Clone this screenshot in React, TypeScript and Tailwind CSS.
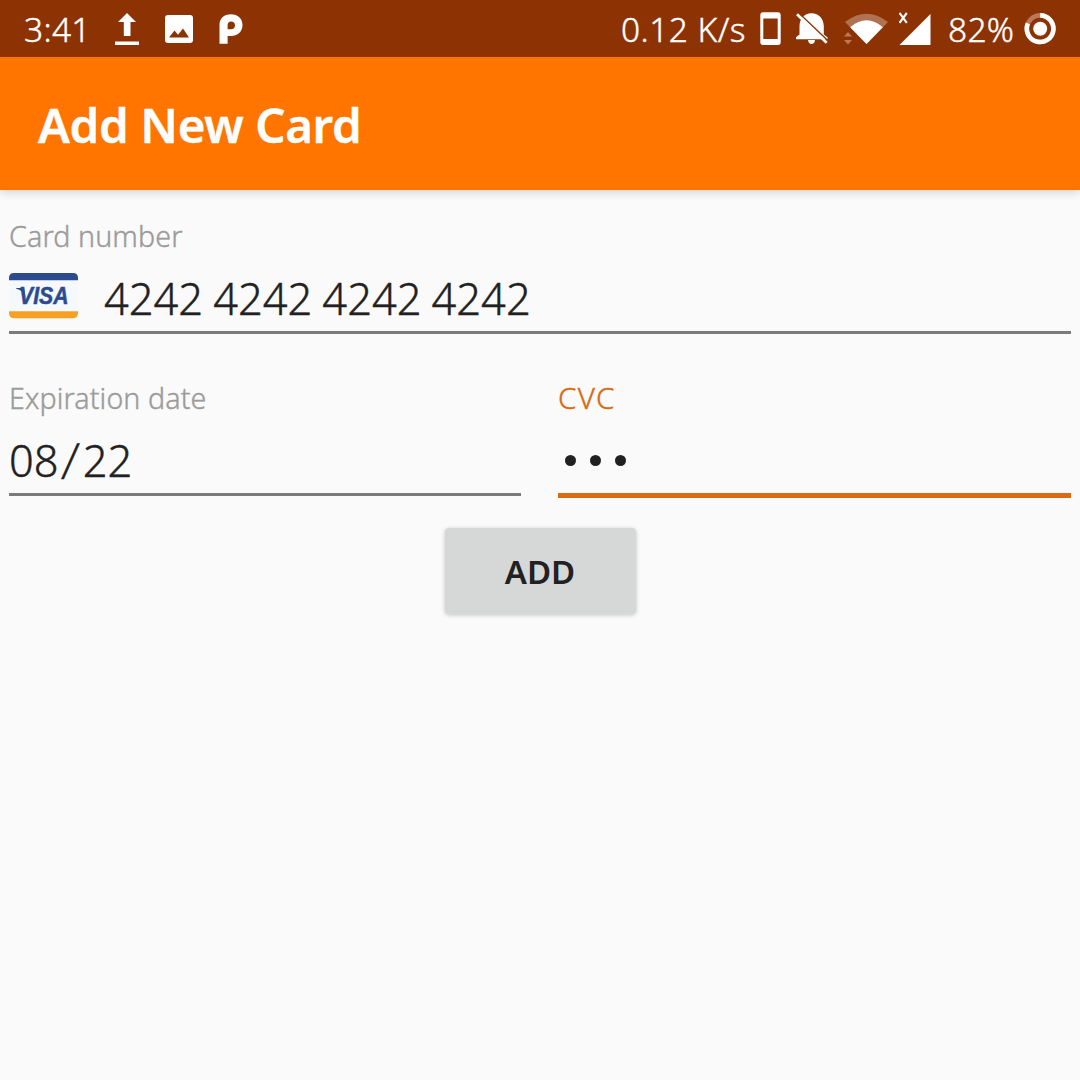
import type { ReactNode } from 'react';

function UploadIcon() {
  return (
    <svg className="ml-[25px] h-[34px] w-6 shrink-0" viewBox="0 0 24 34" fill="#fff">
      <path d="M12 1 L21 10 H15.5 V24 H8.8 V10 H3 Z M0 29.5 H24 V33 H0 Z" />
    </svg>
  );
}

function ImageIcon() {
  return (
    <svg className="ml-[26px] h-7 w-7 shrink-0" viewBox="0 0 28 28">
      <rect width="28" height="28" rx="3" fill="#fff" />
      <path d="M4 22.5 L9.5 15.5 L13 19.7 L18 13.5 L24 22.5 Z" fill="#8d3303" />
    </svg>
  );
}

function PandoraIcon() {
  return (
    <svg className="ml-[26px] h-[30px] w-6 shrink-0" viewBox="0 0 24 30">
      <path
        fillRule="evenodd"
        fill="#fff"
        d="M0.5 29.7 V10.5 C0.5 4.4 5.3 0.3 12 0.3 C18.8 0.3 23.5 4.7 23.5 11 C23.5 17.7 18.6 22 12 22 H8.6 V29.7 Z M8.6 15.2 H12 C14.5 15.2 16 13.6 16 11.2 C16 8.9 14.4 7.4 12.2 7.4 C9.9 7.4 8.6 8.9 8.6 11.2 Z"
      />
    </svg>
  );
}

function PhoneIcon() {
  return (
    <svg className="h-[34px] w-[22px] shrink-0" viewBox="0 0 22 34">
      <path
        fillRule="evenodd"
        fill="#fff"
        d="M3 0.3 H18 Q20.7 0.3 20.7 3.3 V30 Q20.7 33 18 33 H3 Q0.3 33 0.3 30 V3.3 Q0.3 0.3 3 0.3 Z M3.3 6.5 V27 H17.7 V6.5 Z"
      />
    </svg>
  );
}

function BellOffIcon() {
  return (
    <svg className="h-8 w-8 shrink-0" viewBox="0 0 32 32" fill="#fff">
      <path d="M0 26.3 V24.3 L3.5 21.5 V13.5 C3.5 6 8 0.2 15.5 0.2 C23 0.2 27.8 6 27.8 13.5 V21.5 L31.5 24.3 V26.3 Z" />
      <path d="M12 27 H19 C18.7 29.8 17.6 31 15.5 31 C13.5 31 12.3 29.8 12 27 Z" />
      <path d="M2.8 0 L32 27.7" stroke="#8d3303" strokeWidth="1.4" />
      <path d="M1 1.2 L30.7 29.7" stroke="#fff" strokeWidth="2.6" />
    </svg>
  );
}

function WifiIcon() {
  return (
    <svg className="h-8 w-11 shrink-0" viewBox="0 0 44 32">
      <path d="M1 9 Q22.5 -7.5 44 9 L22.5 31 Z" fill="#fff" fillOpacity="0.31" />
      <path d="M6.2 14.2 Q22.5 0.5 38.8 14.2 L22.5 31 Z" fill="#fff" />
      <path d="M0 23.5 L4 19 L8 23.5 Z M0 27 H8 L4 31.5 Z" fill="#bb785b" />
    </svg>
  );
}

function SignalIcon() {
  return (
    <svg className="h-9 w-8 shrink-0" viewBox="0 0 32 36">
      <path d="M0.5 34 L31.5 3 V34 Z" fill="#fff" />
      <path d="M0.5 2 L7.8 11.8 M7.8 2 L0.5 11.8" stroke="#fff" strokeWidth="2.1" />
    </svg>
  );
}

function BatteryIcon() {
  return (
    <svg className="h-8 w-8 shrink-0" viewBox="0 0 32 32" fill="none">
      <circle cx="16.2" cy="15.7" r="13.3" stroke="#bb785b" strokeWidth="4.6" />
      <path d="M16.2 2.4 A13.3 13.3 0 1 1 3.9 10.4" stroke="#fff" strokeWidth="4.6" />
      <circle cx="16.2" cy="15.7" r="7" fill="#fff" />
    </svg>
  );
}

function VisaIcon() {
  return (
    <svg className="h-[46px] w-[69px] shrink-0" viewBox="0 0 69 46">
      <path d="M0 7 H69 V39 H0 Z" fill="#f5f9fe" />
      <path d="M0 7.3 V5 Q0 0 5 0 H64 Q69 0 69 5 V7.3 Z" fill="#2c4b8f" />
      <path d="M0 38.3 H69 V40 Q69 45.3 63.5 45.3 H5.5 Q0 45.3 0 40 Z" fill="#f8a024" />
      <path d="M7 14.9 H15 L17 27 C15.5 20.5 12.5 17 7 15.6 Z" fill="#2c4b8f" />
      <text
        x="10"
        y="31"
        textLength="49.5"
        lengthAdjust="spacingAndGlyphs"
        fill="#2c4b8f"
        fontFamily="Liberation Sans, sans-serif"
        fontSize="23.5"
        fontStyle="italic"
        fontWeight="700"
        stroke="#2c4b8f"
        strokeWidth="0.5"
      >
        VISA
      </text>
    </svg>
  );
}

function Field({
  label,
  active = false,
  children,
}: {
  label: string;
  active?: boolean;
  children: ReactNode;
}) {
  return (
    <div className="flex min-w-0 flex-1 flex-col">
      <div
        className={`h-[42px] leading-[44px] ${active ? 'text-[29.5px] tracking-[1.4px] text-[#d86b13]' : 'text-[28.6px] tracking-[0.12px] text-[#9b9b9b]'}`}
      >
        {label}
      </div>
      <div className="flex h-[75px] items-center pt-2 text-[43.4px] leading-[60px] text-[#212121]">
        {children}
      </div>
      <div className={active ? 'h-[5px] bg-[#d86b13]' : 'mb-0.5 h-[3px] bg-[#7b7b7b]'} />
    </div>
  );
}

export default function App() {
  return (
    <div className="flex h-[1080px] w-[1080px] flex-col overflow-hidden bg-[#fafafa] font-['Noto_Sans',sans-serif] font-light whitespace-nowrap [-webkit-text-stroke:0.4px]">
      <header>
        <div className="relative flex h-[57px] items-center justify-between bg-[#8d3303] pr-6 pl-6 text-[33.5px] text-white">
          <div className="flex items-center">
            <span className="w-[66px] pt-0.5 tracking-[0.3px]">3:41</span>
            <UploadIcon />
            <ImageIcon />
            <PandoraIcon />
          </div>
          <div className="flex items-center">
            <span className="mr-[14px] w-[125px] pt-0.5 tracking-[0.45px]">0.12 K/s</span>
            <PhoneIcon />
            <span className="w-[14px]" />
            <BellOffIcon />
            <span className="w-4" />
            <WifiIcon />
            <span className="w-[11px]" />
            <SignalIcon />
            <span className="mr-[10px] ml-[17px] w-[66px] pt-0.5 tracking-[0.3px]">82%</span>
            <BatteryIcon />
          </div>
        </div>
        <div className="flex h-[133px] items-center bg-[#ff7500] pl-[38px] shadow-[0_2px_9px_rgba(0,0,0,0.17)]">
          <h1 className="pt-[3px] text-[47.5px] font-semibold tracking-[-0.35px] text-white">
            Add New Card
          </h1>
        </div>
      </header>
      <main className="flex flex-col px-[9px] pt-6">
        <div className="flex">
          <Field label="Card number">
            <div className="-mt-[3px]">
              <VisaIcon />
            </div>
            <span className="ml-[26px] pt-[3px] [word-spacing:-1.2px]">4242 4242 4242 4242</span>
          </Field>
        </div>
        <div className="mt-10 grid grid-cols-[512px_513px] gap-[37px]">
          <Field label="Expiration date">
            <span className="pt-[3px]">
              08
              <span className="mx-[4.5px] inline-block -skew-x-[8deg] scale-y-115">/</span>
              22
            </span>
          </Field>
          <Field label="CVC" active>
            <div className="flex gap-[14px] pt-0.5 pl-[7px]">
              <span className="size-[11px] rounded-full bg-[#212121]" />
              <span className="size-[11px] rounded-full bg-[#212121]" />
              <span className="size-[11px] rounded-full bg-[#212121]" />
            </div>
          </Field>
        </div>
        <button className="mt-[30px] h-[86px] w-[191px] self-center rounded-[4px] bg-[#d6d8d7] pt-0.5 text-[33px] font-semibold text-[#212121] shadow-[0_1px_4px_rgba(0,0,0,0.22)] [-webkit-text-stroke:0px]">
          ADD
        </button>
      </main>
    </div>
  );
}
